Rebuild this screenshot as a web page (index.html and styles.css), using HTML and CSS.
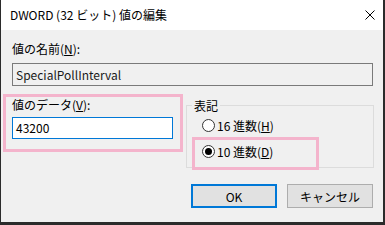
FILE: index.html
```html
<!DOCTYPE html>
<html lang="ja">
<head>
    <meta charset="UTF-8">
    <title>DWORD (32 ビット) 値の編集</title>
    <link rel="stylesheet" href="styles.css">
</head>
<body>
    <div class="dialog">
        <div class="titlebar">
            <span class="title">DWORD (32 ビット) 値の編集</span>
            <svg class="close" width="10" height="10" viewBox="0 0 10 10">
                <path d="M0.5 0.5 L9.5 9.5 M9.5 0.5 L0.5 9.5" stroke="#000" stroke-width="1" fill="none"/>
            </svg>
        </div>
        <div class="content">
            <div class="label">値の名前(<u>N</u>):</div>
            <div class="textbox readonly">SpecialPollInterval</div>

            <div class="row">
                <div class="data mark">
                    <div class="label">値のデータ(<u>V</u>):</div>
                    <div class="textbox focused">43200</div>
                </div>
                <fieldset class="base">
                    <legend>表記</legend>
                    <div class="radio"><span class="dot"></span>16 進数(<u>H</u>)</div>
                    <div class="radio mark checked"><span class="dot"></span>10 進数(<u>D</u>)</div>
                </fieldset>
            </div>

            <div class="buttons">
                <button class="btn btn-default">OK</button>
                <button class="btn">キャンセル</button>
            </div>
        </div>
    </div>
</body>
</html>
```

FILE: styles.css
```css
* {
    box-sizing: border-box;
    margin: 0;
    padding: 0;
}

body {
    background: #2b2b2b;
    font-family: "Noto Sans CJK JP", sans-serif;
    font-size: 12px;
    color: #000;
}

.dialog {
    width: 382px;
    height: 222px;
    margin-left: 1px;
    background: #f0f0f0;
    overflow: hidden;
}

.titlebar {
    height: 30px;
    background: #fff;
    display: flex;
    align-items: center;
    justify-content: space-between;
    padding: 0 8px 0 9px;
}

.title {
    line-height: 30px;
}

.content {
    padding: 11px 10px 0 11px;
}

.label {
    line-height: 16px;
}

.textbox {
    margin-top: 6px;
    height: 23px;
    line-height: 21px;
    padding-left: 3px;
    border: 1px solid #7a7a7a;
}

.readonly {
    background: #f0f0f0;
    color: #1a1a1a;
}

.row {
    display: flex;
    align-items: flex-start;
    margin-top: 8px;
}

.mark {
    border: 3px solid #f4b4cc;
}

.data {
    flex-shrink: 0;
    margin-left: -9px;
    width: 180px;
    height: 58px;
    padding-left: 6px;
}

.data .label {
    line-height: 15px;
}

.focused {
    margin-top: 5px;
    width: 161px;
    height: 22px;
    line-height: 20px;
    background: #fff;
    border-color: #0078d7;
}

.base {
    flex-shrink: 0;
    margin-left: 3px;
    margin-top: 4px;
    width: 188px;
    min-width: 0;
    border: 1px solid #dcdcdc;
    padding: 0;
}

.base legend {
    margin-left: 5px;
    padding: 0 2px;
    line-height: 15px;
}

.radio {
    display: flex;
    align-items: center;
    height: 24px;
    padding-left: 15px;
}

.radio.mark {
    width: 127px;
    height: 33px;
    margin-left: 5px;
    margin-bottom: -3px;
    padding-left: 7px;
    padding-bottom: 5px;
}

.dot {
    display: flex;
    align-items: center;
    justify-content: center;
    width: 13px;
    height: 13px;
    margin-right: 2px;
    border: 1px solid #333;
    border-radius: 50%;
    background: #fff;
}

.checked .dot::after {
    content: "";
    width: 7px;
    height: 7px;
    border-radius: 50%;
    background: #000;
}

.buttons {
    display: flex;
    justify-content: flex-end;
    gap: 10px;
    margin-top: 16px;
}

.btn {
    width: 86px;
    height: 24px;
    border: 1px solid #adadad;
    background: #e1e1e1;
    font: inherit;
    color: #000;
}

.btn-default {
    border: 2px solid #0078d7;
}
```
